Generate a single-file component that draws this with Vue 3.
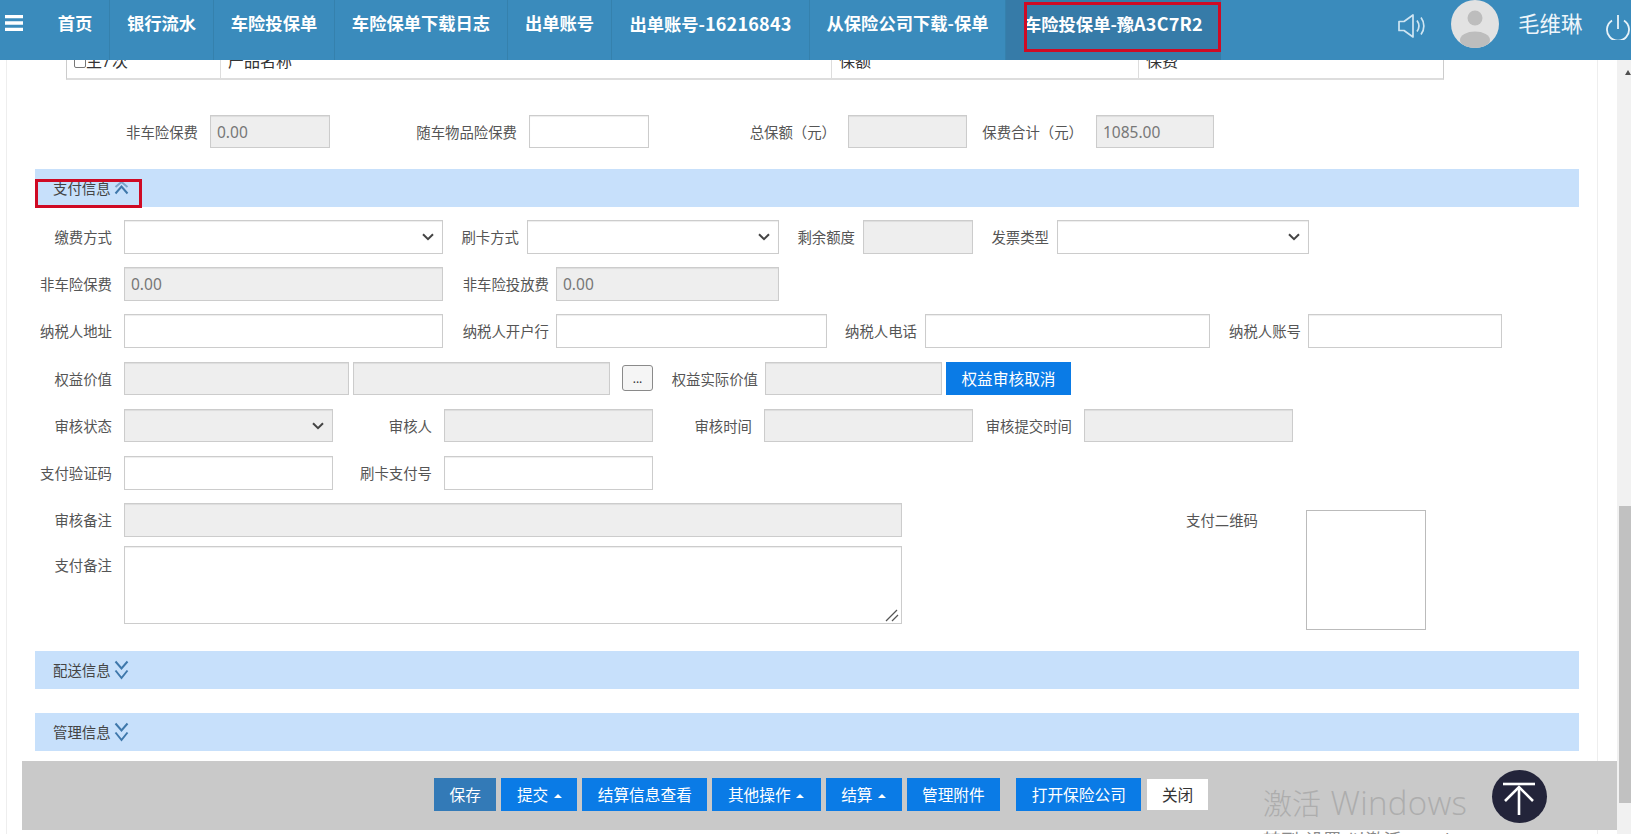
<script setup>
const tabs = [
  { text: '首页', w: 69 },
  { text: '银行流水', w: 104 },
  { text: '车险投保单', w: 121 },
  { text: '车险保单下载日志', w: 173 },
  { text: '出单账号', w: 104 },
  { text: '出单账号-', latin: '16216843', w: 198 },
  { text: '从保险公司下载-保单', w: 196 },
  { text: '车险投保单-豫', latin: 'A3C7R2', w: 215, active: true }
]

const f = (label, lw, pad, w, opts = {}) => ({ label, lw, pad, w, type: 'input', ...opts })
const gray = { gray: true }

const premiumRow = [
  f('非车险保费', 175, 12, 120, { gray: true, val: '0.00' }),
  f('随车物品险保费', 199, 12, 120),
  f('总保额（元）', 199, 12, 119, gray),
  f('保费合计（元）', 129, 13, 118, { gray: true, val: '1085.00' })
]

const rows = [
  { fields: [
    f('缴费方式', 89, 12, 319, { type: 'select' }),
    f('刷卡方式', 84, 8, 252, { type: 'select' }),
    f('剩余额度', 84, 8, 110, gray),
    f('发票类型', 84, 8, 252, { type: 'select' })
  ] },
  { fields: [
    f('非车险保费', 89, 12, 319, { gray: true, val: '0.00' }),
    f('非车险投放费', 113, 7, 223, { gray: true, val: '0.00' })
  ] },
  { wide: true, fields: [
    f('纳税人地址', 89, 12, 319),
    f('纳税人开户行', 113, 7, 271),
    f('纳税人电话', 98, 8, 285),
    f('纳税人账号', 98, 7, 194)
  ] },
  { short: true, wide: true, fields: [
    f('权益价值', 89, 12, 225, gray),
    f('', 4, 0, 257, gray),
    f('', 12, 0, 31, { type: 'dots' }),
    f('权益实际价值', 112, 7, 177, gray),
    f('', 4, 0, 125, { type: 'action', val: '权益审核取消' })
  ] },
  { short: true, wide: true, fields: [
    f('审核状态', 89, 12, 209, { type: 'select', gray: true }),
    f('审核人', 111, 12, 209, gray),
    f('审核时间', 111, 12, 209, gray),
    f('审核提交时间', 111, 12, 209, gray)
  ] },
  { fields: [
    f('支付验证码', 89, 12, 209),
    f('刷卡支付号', 111, 12, 209)
  ] }
]

const tableCols = ['主/次', '产品名称', '保额', '保费']

const actions = [
  { text: '保存', kind: 'current' },
  { text: '提交', caret: true },
  { text: '结算信息查看' },
  { text: '其他操作', caret: true, kind: 'roomy' },
  { text: '结算', caret: true },
  { text: '管理附件' },
  { text: '打开保险公司', kind: 'apart' },
  { text: '关闭', kind: 'plain' }
]
</script>

<template>
  <div class="page">
    <header class="topbar">
      <div class="menu-btn">
        <svg width="18" height="16" viewBox="0 0 18 16"><path d="M0 1.5h18M0 8h18M0 14.5h18" stroke="#fff" stroke-width="3.4" /></svg>
      </div>
      <nav class="tabs">
        <a
          v-for="t in tabs"
          :key="t.text"
          class="tab"
          :class="{ active: t.active }"
          :style="{ width: t.w + 'px' }"
        >{{ t.text }}<span v-if="t.latin" class="tab-latin">{{ t.latin }}</span><i v-if="t.active" class="tab-mark"></i></a>
      </nav>
      <div class="user">
        <svg class="speaker" width="28" height="24" viewBox="0 0 28 24" fill="none" stroke="#cfe5f2" stroke-width="1.7">
          <path d="M1 7.5h5L15 1v22l-9-6.5H1z" stroke-linejoin="round" />
          <path d="M19 6.5c2.400 3.400 2.400 7.600 0 11" />
          <path d="M23 3.500c3.800 5 3.800 12 0 17" />
        </svg>
        <svg class="avatar" width="48" height="48" viewBox="0 0 48 48">
          <clipPath id="avatar-clip"><circle cx="24" cy="24" r="24" /></clipPath>
          <g clip-path="url(#avatar-clip)">
            <rect width="48" height="48" fill="#e2e2e2" />
            <circle cx="24" cy="18" r="7.500" fill="#bdbdbd" />
            <ellipse cx="24" cy="40" rx="15" ry="8.500" fill="#bdbdbd" />
          </g>
        </svg>
        <span class="username">毛维琳</span>
        <svg class="power" width="25" height="26" viewBox="0 0 25 26" fill="none" stroke="#e8f2f8" stroke-width="1.800">
          <path d="M12 1v14" />
          <path d="M6 6.500a11 11 0 1 0 12 0" />
        </svg>
      </div>
    </header>

    <div class="viewport">
      <main class="content">
        <div class="product-table">
          <div v-for="(c, i) in tableCols" :key="c" class="product-cell" :class="{ lead: i === 0 }">
            <i v-if="i === 0" class="checkbox"></i>{{ c }}
          </div>
        </div>

        <div class="row short premium">
          <template v-for="x in premiumRow" :key="x.label">
            <label class="lbl" :style="{ width: x.lw + 'px', paddingRight: x.pad + 'px' }">{{ x.label }}</label>
            <input class="ctl" :class="{ gray: x.gray }" :style="{ width: x.w + 'px' }" :value="x.val" readonly />
          </template>
        </div>

        <section class="sec pay">
          <span>支付信息</span>
          <svg width="15" height="14" viewBox="0 0 15 14" fill="none" stroke-width="2">
            <path d="M1.500 6 7.500 1l6 5" stroke="#7ba4c9" />
            <path d="M1.500 12.500l6-7 6 7" stroke="#3f78ab" />
          </svg>
          <i class="sec-mark"></i>
        </section>

        <div v-for="(r, n) in rows" :key="n" class="row" :class="{ short: r.short, wide: r.wide }">
          <template v-for="(x, k) in r.fields" :key="k">
            <label class="lbl" :style="{ width: x.lw + 'px', paddingRight: x.pad + 'px' }">{{ x.label }}</label>
            <select v-if="x.type === 'select'" class="ctl" :class="{ gray: x.gray }" :style="{ width: x.w + 'px' }"></select>
            <button v-else-if="x.type === 'dots'" class="dots" :style="{ width: x.w + 'px' }">...</button>
            <button v-else-if="x.type === 'action'" class="action" :style="{ width: x.w + 'px' }">{{ x.val }}</button>
            <input v-else class="ctl" :class="{ gray: x.gray }" :style="{ width: x.w + 'px' }" :value="x.val" readonly />
          </template>
        </div>

        <div class="notes">
          <div class="notes-main">
            <div class="row audit">
              <label class="lbl first">审核备注</label>
              <input class="ctl gray note-ctl" readonly />
            </div>
            <div class="remark">
              <label class="lbl first remark-lbl">支付备注</label>
              <textarea class="ctl note-ctl remark-box"></textarea>
              <svg class="grip" width="14" height="13" viewBox="0 0 14 13" fill="none" stroke="#555" stroke-width="1.300">
                <path d="M1 12 12 1" />
                <path d="M7 12l6-6" />
              </svg>
            </div>
          </div>
          <span class="qr-label">支付二维码</span>
          <div class="qr-box"></div>
        </div>

        <section class="sec delivery">
          <span>配送信息</span>
          <svg width="15" height="20" viewBox="0 0 15 20" fill="none" stroke="#3f78ab" stroke-width="2">
            <path d="M1.500 1.500l6 7 6-7" />
            <path d="M1.500 10.500l6 7.500 6-7.500" />
          </svg>
        </section>
        <section class="sec manage">
          <span>管理信息</span>
          <svg width="15" height="20" viewBox="0 0 15 20" fill="none" stroke="#3f78ab" stroke-width="2">
            <path d="M1.500 1.500l6 7 6-7" />
            <path d="M1.500 10.500l6 7.500 6-7.500" />
          </svg>
        </section>
      </main>

      <aside class="scrollbar">
        <i class="scroll-arrow"></i>
        <i class="scroll-thumb"></i>
      </aside>
    </div>

    <footer class="actions">
      <button v-for="a in actions" :key="a.text" class="act" :class="a.kind">
        {{ a.text }}<i v-if="a.caret" class="caret"></i>
      </button>
    </footer>

    <div class="watermark">
      <p class="wm-title">激活 <span>Windows</span></p>
      <p class="wm-sub">转到“设置”以激活 Windows。</p>
    </div>

    <button class="to-top" aria-label="top">
      <svg width="55" height="53" viewBox="0 0 55 53" fill="none" stroke="#fff" stroke-width="2.600">
        <path d="M11 14h32" />
        <path d="M27 18v27" />
        <path d="M13 31l14-14 14 14" />
      </svg>
    </button>
  </div>
</template>

<style>
html, body { margin: 0; padding: 0; overflow: hidden; background: #fff; }
</style>

<style scoped>
.page {
  position: relative;
  display: flex;
  flex-direction: column;
  width: 1631px;
  height: 834px;
  overflow: hidden;
  background: #fff;
  font-family: "Noto Sans", "Noto Sans CJK SC", sans-serif;
  font-size: 14.4px;
  color: #555;
}

/* top bar */
.topbar {
  position: relative;
  z-index: 2;
  display: flex;
  flex: none;
  height: 60px;
  background: #3a8bbc;
  color: #fff;
}
.menu-btn {
  flex: none;
  width: 41px;
  padding: 15px 0 0 5px;
  box-sizing: border-box;
}
.tabs { display: flex; flex: none; }
.tab {
  position: relative;
  display: block;
  box-sizing: border-box;
  height: 60px;
  border-right: 1px solid #3581ad;
  font-family: "Noto Sans CJK SC", sans-serif;
  font-size: 17.3px;
  font-weight: 700;
  line-height: 46px;
  text-align: center;
  white-space: nowrap;
}
.tab-latin { font-size: 18px; letter-spacing: 0.2px; }
.tab.active {
  border-right: 0;
  padding-left: 18px;
  text-align: left;
  background: #367ba8;
}
.tab-mark {
  position: absolute;
  left: 18px;
  right: 0;
  top: 2px;
  height: 50px;
  border: 3px solid #cf0a24;
  box-sizing: border-box;
}
.user {
  display: flex;
  align-items: flex-start;
  margin-left: auto;
  width: 233px;
  flex: none;
}
.speaker { flex: none; margin-top: 14px; }
.avatar { flex: none; margin-left: 25px; }
.username {
  flex: none;
  margin-left: 19px;
  font-family: "Noto Sans CJK SC", sans-serif;
  font-size: 21.5px;
  line-height: 45px;
  color: #edf5fa;
}
.power { flex: none; margin: 14px 0 0 23px; }

/* scrolled area */
.viewport {
  display: flex;
  flex: 1;
  min-height: 0;
  padding-left: 6px;
}
.content {
  flex: none;
  box-sizing: border-box;
  width: 1592px;
  padding-left: 28px;
  border-left: 1px solid #eee;
  border-right: 1px solid #eee;
  overflow: hidden;
}
.scrollbar {
  flex: none;
  display: flex;
  flex-direction: column;
  width: 14px;
  margin-left: 19px;
  background: #f1f1f1;
}
.scroll-arrow {
  flex: none;
  width: 0;
  height: 0;
  margin: 10px 0 0 8px;
  border-left: 3px solid transparent;
  border-right: 3px solid transparent;
  border-bottom: 5px solid #505050;
}
.scroll-thumb {
  flex: none;
  height: 297px;
  margin: 431px 0 0 2px;
  background: #c1c1c1;
}

/* clipped product table */
.product-table {
  display: grid;
  grid-template-columns: 154px 611px 307px 306px;
  box-sizing: border-box;
  width: 1378px;
  height: 34px;
  margin: -14px 0 35px 31px;
  border-left: 1px solid #ccc;
  border-right: 1px solid #ccc;
  border-bottom: 2px solid #ddd;
}
.product-cell {
  padding-left: 7px;
  border-right: 1px solid #ddd;
  font-size: 16px;
  line-height: 30px;
  color: #333;
}
.product-cell.lead { letter-spacing: 2px; }
.product-cell:last-child { border-right: 0; }
.checkbox {
  display: inline-block;
  box-sizing: border-box;
  width: 12px;
  height: 12px;
  border: 1px solid #777;
  border-radius: 2px;
  vertical-align: -1px;
}

/* form rows */
.row {
  display: flex;
  height: 34px;
  margin-bottom: 13px;
}
.row.short { height: 33px; }
.row.wide { margin-bottom: 14px; }
.row.premium { margin-bottom: 21px; }
.lbl {
  flex: none;
  box-sizing: border-box;
  display: block;
  padding-top: 1px;
  line-height: 33px;
  text-align: right;
  white-space: nowrap;
}
.lbl.first { width: 89px; padding-right: 12px; }
.ctl {
  flex: none;
  box-sizing: border-box;
  height: 100%;
  margin: 0;
  padding: 0 6px;
  border: 1px solid #ccc;
  border-radius: 0;
  background-color: #fff;
  box-shadow: inset 0 1px 1px rgba(0, 0, 0, 0.075);
  font: inherit;
  font-size: 15.5px;
  color: #777;
  outline: none;
}
.ctl.gray { background-color: #eee; }
select.ctl {
  appearance: none;
  color: #333;
  background-image: url("data:image/svg+xml,%3Csvg xmlns='http://www.w3.org/2000/svg' width='12' height='8' viewBox='0 0 12 8'%3E%3Cpath d='M1 1.200l5 5 5-5' fill='none' stroke='%23444' stroke-width='2'/%3E%3C/svg%3E");
  background-repeat: no-repeat;
  background-position: right 8px center;
}
.dots {
  flex: none;
  height: 26px;
  margin-top: 3px;
  padding: 0;
  border: 1px solid #8a8a8a;
  border-radius: 3px;
  background: #f5f5f5;
  font: inherit;
  font-size: 12px;
  line-height: 26px;
  color: #333;
}
.action {
  flex: none;
  height: 33px;
  padding: 0;
  border: 0;
  background: #0a7be6;
  color: #fff;
  font: inherit;
  font-size: 15.7px;
}

/* notes + QR */
.notes {
  display: flex;
  align-items: flex-start;
  height: 127px;
  margin-bottom: 21px;
}
.notes-main { flex: none; width: 867px; }
.row.audit { margin-bottom: 9px; }
.note-ctl { width: 778px; }
.remark { position: relative; display: flex; height: 78px; }
.remark-lbl { padding-top: 4px; line-height: 32px; }
.remark-box { resize: none; }
.grip { position: absolute; right: 3px; bottom: 2px; }
.qr-label {
  flex: none;
  width: 72px;
  margin: 8px 0 0 284px;
  line-height: 20px;
  white-space: nowrap;
}
.qr-box {
  flex: none;
  box-sizing: border-box;
  width: 120px;
  height: 120px;
  margin: 7px 0 0 48px;
  border: 1px solid #bbb;
}

/* section heads */
.sec {
  position: relative;
  display: flex;
  align-items: center;
  gap: 3px;
  box-sizing: border-box;
  width: 1544px;
  height: 38px;
  padding: 0 0 0 18px;
  background: #c7e0fb;
  color: #444;
}
.sec span { position: relative; top: -1px; }
.sec.pay { margin-bottom: 13px; }
.sec.delivery { margin-bottom: 24px; }
.sec-mark {
  position: absolute;
  left: 0;
  top: 10px;
  width: 107px;
  height: 29px;
  box-sizing: border-box;
  border: 3px solid #cf0a24;
}

/* bottom bar */
.actions {
  position: absolute;
  left: 22px;
  top: 761px;
  z-index: 1;
  display: flex;
  align-items: center;
  gap: 5px;
  box-sizing: border-box;
  width: 1595px;
  height: 69px;
  padding: 0 0 2px 412px;
  background: #c9c9c9;
}
.act {
  flex: none;
  height: 33px;
  padding: 0 15.5px;
  border: 0;
  background: #0a7be6;
  color: #fff;
  font: inherit;
  font-size: 15.7px;
  white-space: nowrap;
}
.act.current { background: #337ab7; }
.act.roomy { padding-right: 16.5px; }
.act.apart { margin-left: 11px; }
.act.plain { height: 31px; margin-left: 1px; padding: 0 14.5px; background: #fff; color: #333; }
.caret {
  display: inline-block;
  width: 0;
  height: 0;
  margin-left: 5.5px;
  border-left: 4px solid transparent;
  border-right: 4px solid transparent;
  border-bottom: 4px solid #fff;
  vertical-align: 3px;
}

/* overlays */
.watermark {
  position: absolute;
  left: 1263px;
  top: 782px;
  z-index: 2;
  pointer-events: none;
  font-family: "Open Sans", "Noto Sans CJK SC", sans-serif;
  white-space: nowrap;
}
.wm-title {
  margin: 0;
  font-size: 29px;
  line-height: 42px;
  font-weight: 300;
  color: #adadad;
}
.wm-title span { font-size: 33px; letter-spacing: 0.3px; margin-left: 2px; }
.wm-sub {
  margin: 2px 0 0;
  font-size: 18px;
  line-height: 26px;
  color: #8a8a8a;
}
.to-top {
  position: absolute;
  left: 1492px;
  top: 770px;
  z-index: 3;
  width: 55px;
  height: 53px;
  padding: 0;
  border: 0;
  border-radius: 50%;
  background: #23243a;
}
.to-top svg { display: block; }
</style>
